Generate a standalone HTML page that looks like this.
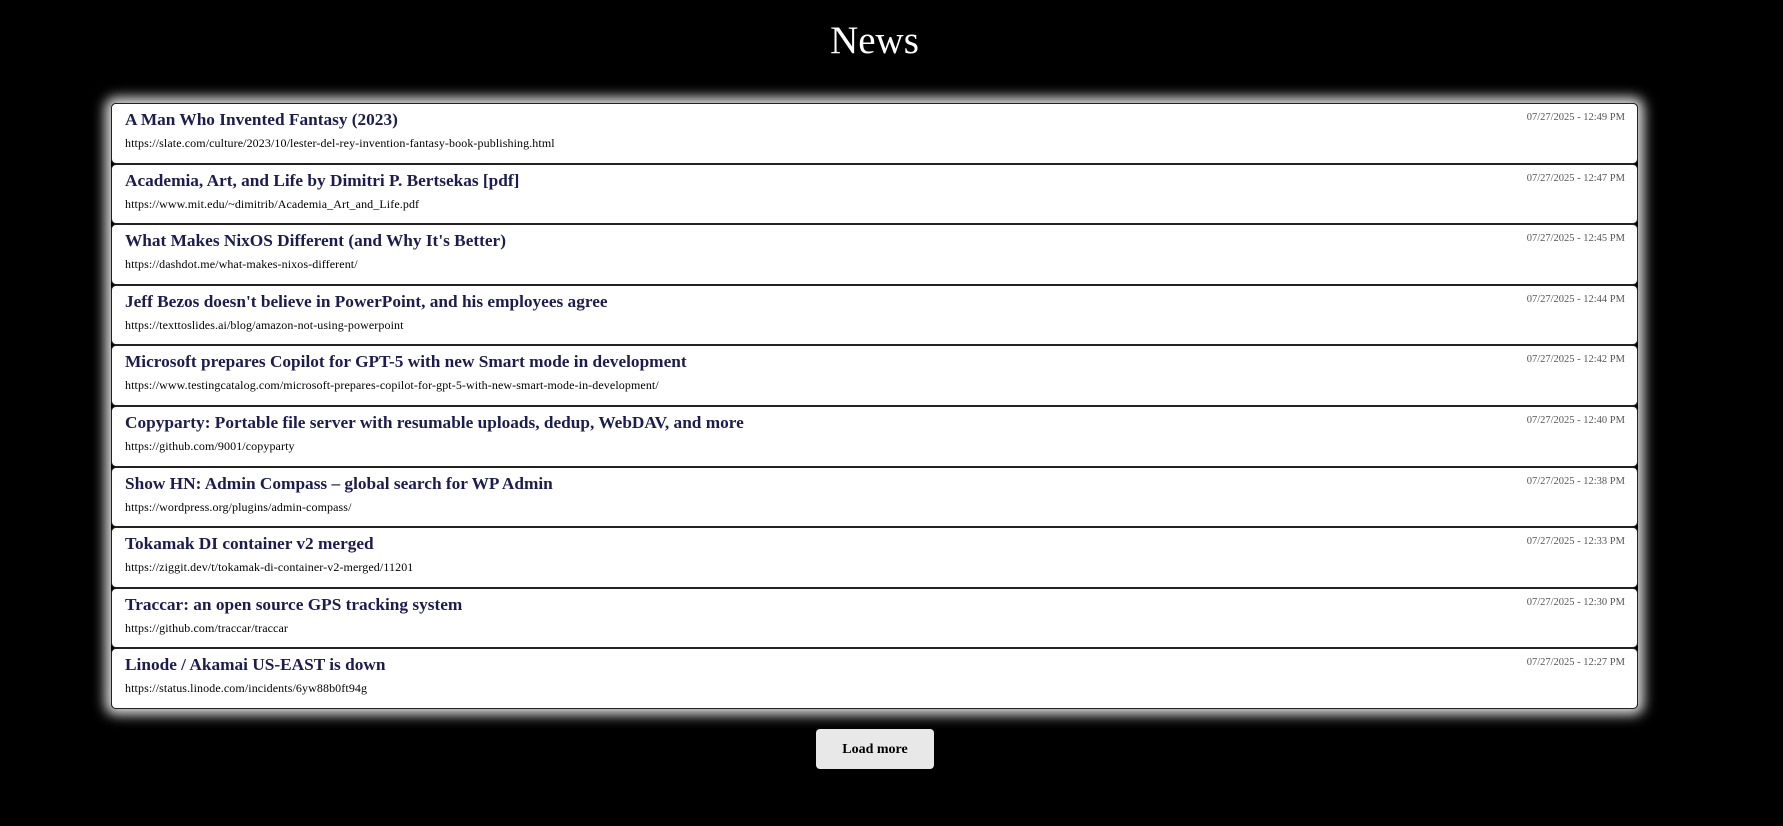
<!DOCTYPE html>
<html><head><meta charset="utf-8"><style>
html,body{margin:0;padding:0;background:#000;width:1783px;height:826px;overflow:hidden;font-family:"Liberation Serif",serif;}
h1{position:absolute;left:0;width:1749px;top:17px;margin:0;text-align:center;color:#fff;font-weight:normal;font-size:39px;line-height:48px;}
.list{position:absolute;left:111px;top:103px;width:1527px;box-shadow:0 0 12px 6px rgba(255,255,255,0.85);border-radius:5px;}
.card{position:relative;box-sizing:border-box;height:60.6px;background:#fff;border:1.5px solid #222;border-radius:5px;}
.t{position:absolute;left:13px;top:6px;font-weight:bold;font-size:17.3px;color:#1c1c50;white-space:nowrap;}
.u{position:absolute;left:13px;top:32px;font-size:12px;letter-spacing:0.1px;color:#000;white-space:nowrap;}
.d{position:absolute;right:12px;top:8px;font-size:10.5px;color:#555;}
.btn{position:absolute;left:816px;top:729px;width:118px;height:40px;background:#e8e8e8;border-radius:4px;text-align:center;line-height:42px;font-weight:bold;font-size:14px;color:#000;}
</style></head><body>
<h1>News</h1>
<div class="list">
<div class="card"><div class="t">A Man Who Invented Fantasy (2023)</div><div class="u">https://slate.com/culture/2023/10/lester-del-rey-invention-fantasy-book-publishing.html</div><div class="d">07/27/2025 - 12:49 PM</div></div>
<div class="card"><div class="t">Academia, Art, and Life by Dimitri P. Bertsekas [pdf]</div><div class="u">https://www.mit.edu/~dimitrib/Academia_Art_and_Life.pdf</div><div class="d">07/27/2025 - 12:47 PM</div></div>
<div class="card"><div class="t">What Makes NixOS Different (and Why It's Better)</div><div class="u">https://dashdot.me/what-makes-nixos-different/</div><div class="d">07/27/2025 - 12:45 PM</div></div>
<div class="card"><div class="t">Jeff Bezos doesn't believe in PowerPoint, and his employees agree</div><div class="u">https://texttoslides.ai/blog/amazon-not-using-powerpoint</div><div class="d">07/27/2025 - 12:44 PM</div></div>
<div class="card"><div class="t">Microsoft prepares Copilot for GPT-5 with new Smart mode in development</div><div class="u">https://www.testingcatalog.com/microsoft-prepares-copilot-for-gpt-5-with-new-smart-mode-in-development/</div><div class="d">07/27/2025 - 12:42 PM</div></div>
<div class="card"><div class="t">Copyparty: Portable file server with resumable uploads, dedup, WebDAV, and more</div><div class="u">https://github.com/9001/copyparty</div><div class="d">07/27/2025 - 12:40 PM</div></div>
<div class="card"><div class="t">Show HN: Admin Compass – global search for WP Admin</div><div class="u">https://wordpress.org/plugins/admin-compass/</div><div class="d">07/27/2025 - 12:38 PM</div></div>
<div class="card"><div class="t">Tokamak DI container v2 merged</div><div class="u">https://ziggit.dev/t/tokamak-di-container-v2-merged/11201</div><div class="d">07/27/2025 - 12:33 PM</div></div>
<div class="card"><div class="t">Traccar: an open source GPS tracking system</div><div class="u">https://github.com/traccar/traccar</div><div class="d">07/27/2025 - 12:30 PM</div></div>
<div class="card"><div class="t">Linode / Akamai US-EAST is down</div><div class="u">https://status.linode.com/incidents/6yw88b0ft94g</div><div class="d">07/27/2025 - 12:27 PM</div></div>
</div>
<div class="btn">Load more</div>
</body></html>
